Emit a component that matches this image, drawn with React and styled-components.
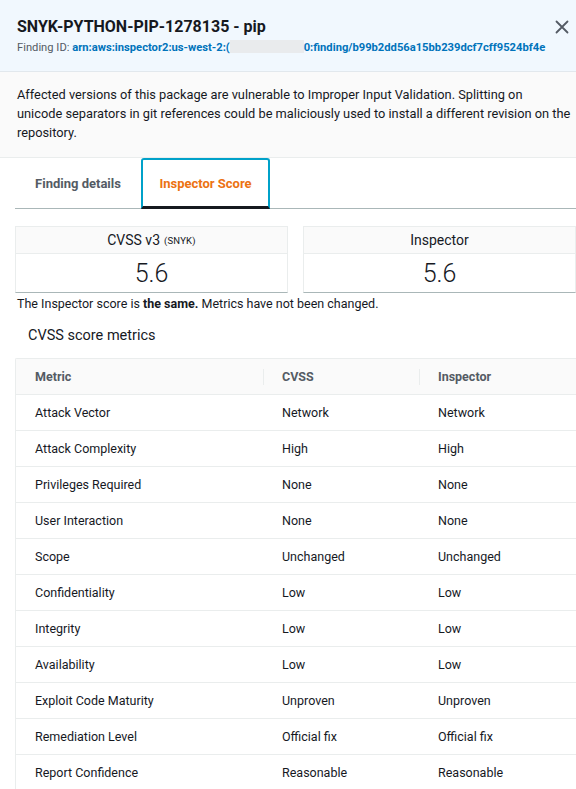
import React from 'react';
import styled, { createGlobalStyle } from 'styled-components';

const GlobalStyle = createGlobalStyle`
  html, body {
    margin: 0;
    padding: 0;
    background: #ffffff;
  }
  body {
    font-family: Roboto, "Liberation Sans", sans-serif;
    color: #16191f;
    -webkit-font-smoothing: antialiased;
  }
`;

const Panel = styled.div`
  width: 576px;
  height: 789px;
  overflow: hidden;
  background: #ffffff;
`;

const Header = styled.div`
  position: relative;
  height: 72px;
  box-sizing: border-box;
  padding: 16px 17px 0 17px;
  background: #f1f8fe;
  border-bottom: 1px solid #e2e8ed;
`;

const Title = styled.h2`
  margin: 0;
  font-size: 16px;
  line-height: 22px;
  font-weight: 700;
  color: #16191f;
`;

const CloseButton = styled.button`
  position: absolute;
  top: 16px;
  right: 3px;
  width: 22px;
  height: 22px;
  padding: 0;
  border: none;
  background: transparent;
  color: #545b64;
  display: flex;
  align-items: center;
  justify-content: center;
`;

const FindingId = styled.div`
  margin-top: 2px;
  font-size: 11.2px;
  line-height: 15px;
  color: #545b64;
  white-space: nowrap;
`;

const Link = styled.span`
  color: #0073bb;
  font-weight: 700;
`;

const Redacted = styled.span`
  display: inline-block;
  width: 74px;
  height: 13px;
  vertical-align: -2px;
  background: #e9ebed;
`;

const Description = styled.p`
  margin: 0;
  padding: 13px 4px 13px 17px;
  height: 86px;
  box-sizing: border-box;
  background: #fafafa;
  border-bottom: 1px solid #eaeded;
  font-size: 12.8px;
  line-height: 19px;
  color: #16191f;
  white-space: nowrap;
`;

const Body = styled.div`
  padding: 0 0 0 15px;
`;

const TabBar = styled.div`
  display: flex;
  align-items: stretch;
  height: 50px;
  border-bottom: 1px solid #aab7b8;
`;

const Tab = styled.div`
  display: flex;
  align-items: center;
  justify-content: center;
  box-sizing: border-box;
  white-space: nowrap;
  width: ${p => p.w}px;
  margin-bottom: -1px;
  font-size: 13px;
  font-weight: 700;
  color: ${p => (p.active ? '#ec7211' : '#545b64')};
  border: ${p => (p.active ? '2px solid #00a1c9' : '2px solid transparent')};
  border-bottom: ${p => (p.active ? '3px solid #16191f' : '2px solid transparent')};
  border-radius: 3px 3px 0 0;
`;

const ScoreRow = styled.div`
  display: grid;
  grid-template-columns: 273px 273px;
  column-gap: 15px;
  margin-top: 17px;
`;

const ScoreCard = styled.div`
  border: 1px solid #eaeded;
  border-bottom: 1px solid #aab7b8;
  box-sizing: border-box;
  height: 67px;
`;

const ScoreHead = styled.div`
  height: 27px;
  box-sizing: border-box;
  background: #fafafa;
  border-bottom: 1px solid #eaeded;
  display: flex;
  align-items: center;
  justify-content: center;
  font-size: 14px;
  color: #16191f;
`;

const Source = styled.span`
  font-size: 9.5px;
  margin-left: 4px;
  letter-spacing: 0.2px;
`;

const ScoreValue = styled.div`
  height: 38px;
  display: flex;
  align-items: center;
  justify-content: center;
  font-size: 25px;
  font-weight: 300;
  color: #16191f;
`;

const Note = styled.p`
  margin: 2px 0 0 2px;
  font-size: 12.5px;
  line-height: 17px;
  color: #16191f;
`;

const SectionTitle = styled.h3`
  margin: 14px 0 0 13px;
  font-size: 14.5px;
  line-height: 20px;
  font-weight: 400;
  color: #16191f;
`;

const TableWrap = styled.div`
  margin-top: 12px;
  border: 1px solid #eaeded;
  border-right: none;
  border-bottom: none;
  border-radius: 2px 0 0 0;
`;

const Table = styled.table`
  width: 100%;
  border-collapse: collapse;
  table-layout: fixed;
  font-size: 12.5px;
  color: #16191f;
`;

const Th = styled.th`
  position: relative;
  box-sizing: border-box;
  height: 35px;
  padding: 0 0 0 ${p => p.pad}px;
  width: ${p => (p.w ? `${p.w}px` : 'auto')};
  text-align: left;
  font-weight: 700;
  color: #545b64;
  background: #fafafa;
  border-bottom: 1px solid #eaeded;

  &::before {
    content: ${p => (p.divider ? "''" : 'none')};
    position: absolute;
    left: 0;
    top: 10px;
    height: 16px;
    border-left: 1px solid #eaeded;
  }
`;

const Td = styled.td`
  height: 35px;
  padding: 0 0 0 ${p => p.pad}px;
  border-bottom: 1px solid #eaeded;
`;

const metrics = [
  ['Attack Vector', 'Network', 'Network'],
  ['Attack Complexity', 'High', 'High'],
  ['Privileges Required', 'None', 'None'],
  ['User Interaction', 'None', 'None'],
  ['Scope', 'Unchanged', 'Unchanged'],
  ['Confidentiality', 'Low', 'Low'],
  ['Integrity', 'Low', 'Low'],
  ['Availability', 'Low', 'Low'],
  ['Exploit Code Maturity', 'Unproven', 'Unproven'],
  ['Remediation Level', 'Official fix', 'Official fix'],
  ['Report Confidence', 'Reasonable', 'Reasonable'],
];

const CloseIcon = () => (
  <svg width="14" height="14" viewBox="0 0 14 14" fill="none">
    <path d="M1.5 1.5 L12.5 12.5 M12.5 1.5 L1.5 12.5" stroke="#545b64" strokeWidth="1.8" strokeLinecap="round" />
  </svg>
);

export default function App() {
  return (
    <Panel>
      <GlobalStyle />
      <Header>
        <Title>SNYK-PYTHON-PIP-1278135 - pip</Title>
        <CloseButton aria-label="Close">
          <CloseIcon />
        </CloseButton>
        <FindingId>
          Finding ID: <Link>arn:aws:inspector2:us-west-2:(<Redacted />0:finding/b99b2dd56a15bb239dcf7cff9524bf4e</Link>
        </FindingId>
      </Header>
      <Description>
        Affected versions of this package are vulnerable to Improper Input Validation. Splitting on
        <br />
        unicode separators in git references could be maliciously used to install a different revision on the
        <br />
        repository.
      </Description>
      <Body>
        <TabBar>
          <Tab w={126}>Finding details</Tab>
          <Tab active w={129}>Inspector Score</Tab>
        </TabBar>
        <ScoreRow>
          <ScoreCard>
            <ScoreHead>
              CVSS v3<Source>(SNYK)</Source>
            </ScoreHead>
            <ScoreValue>5.6</ScoreValue>
          </ScoreCard>
          <ScoreCard>
            <ScoreHead>Inspector</ScoreHead>
            <ScoreValue>5.6</ScoreValue>
          </ScoreCard>
        </ScoreRow>
        <Note>
          The Inspector score is <b>the same.</b> Metrics have not been changed.
        </Note>
        <SectionTitle>CVSS score metrics</SectionTitle>
        <TableWrap>
          <Table>
            <thead>
              <tr>
                <Th w={247} pad={19}>Metric</Th>
                <Th w={156} pad={19} divider>CVSS</Th>
                <Th pad={19} divider>Inspector</Th>
              </tr>
            </thead>
            <tbody>
              {metrics.map(([name, cvss, insp]) => (
                <tr key={name}>
                  <Td pad={19}>{name}</Td>
                  <Td pad={19}>{cvss}</Td>
                  <Td pad={19}>{insp}</Td>
                </tr>
              ))}
            </tbody>
          </Table>
        </TableWrap>
      </Body>
    </Panel>
  );
}
